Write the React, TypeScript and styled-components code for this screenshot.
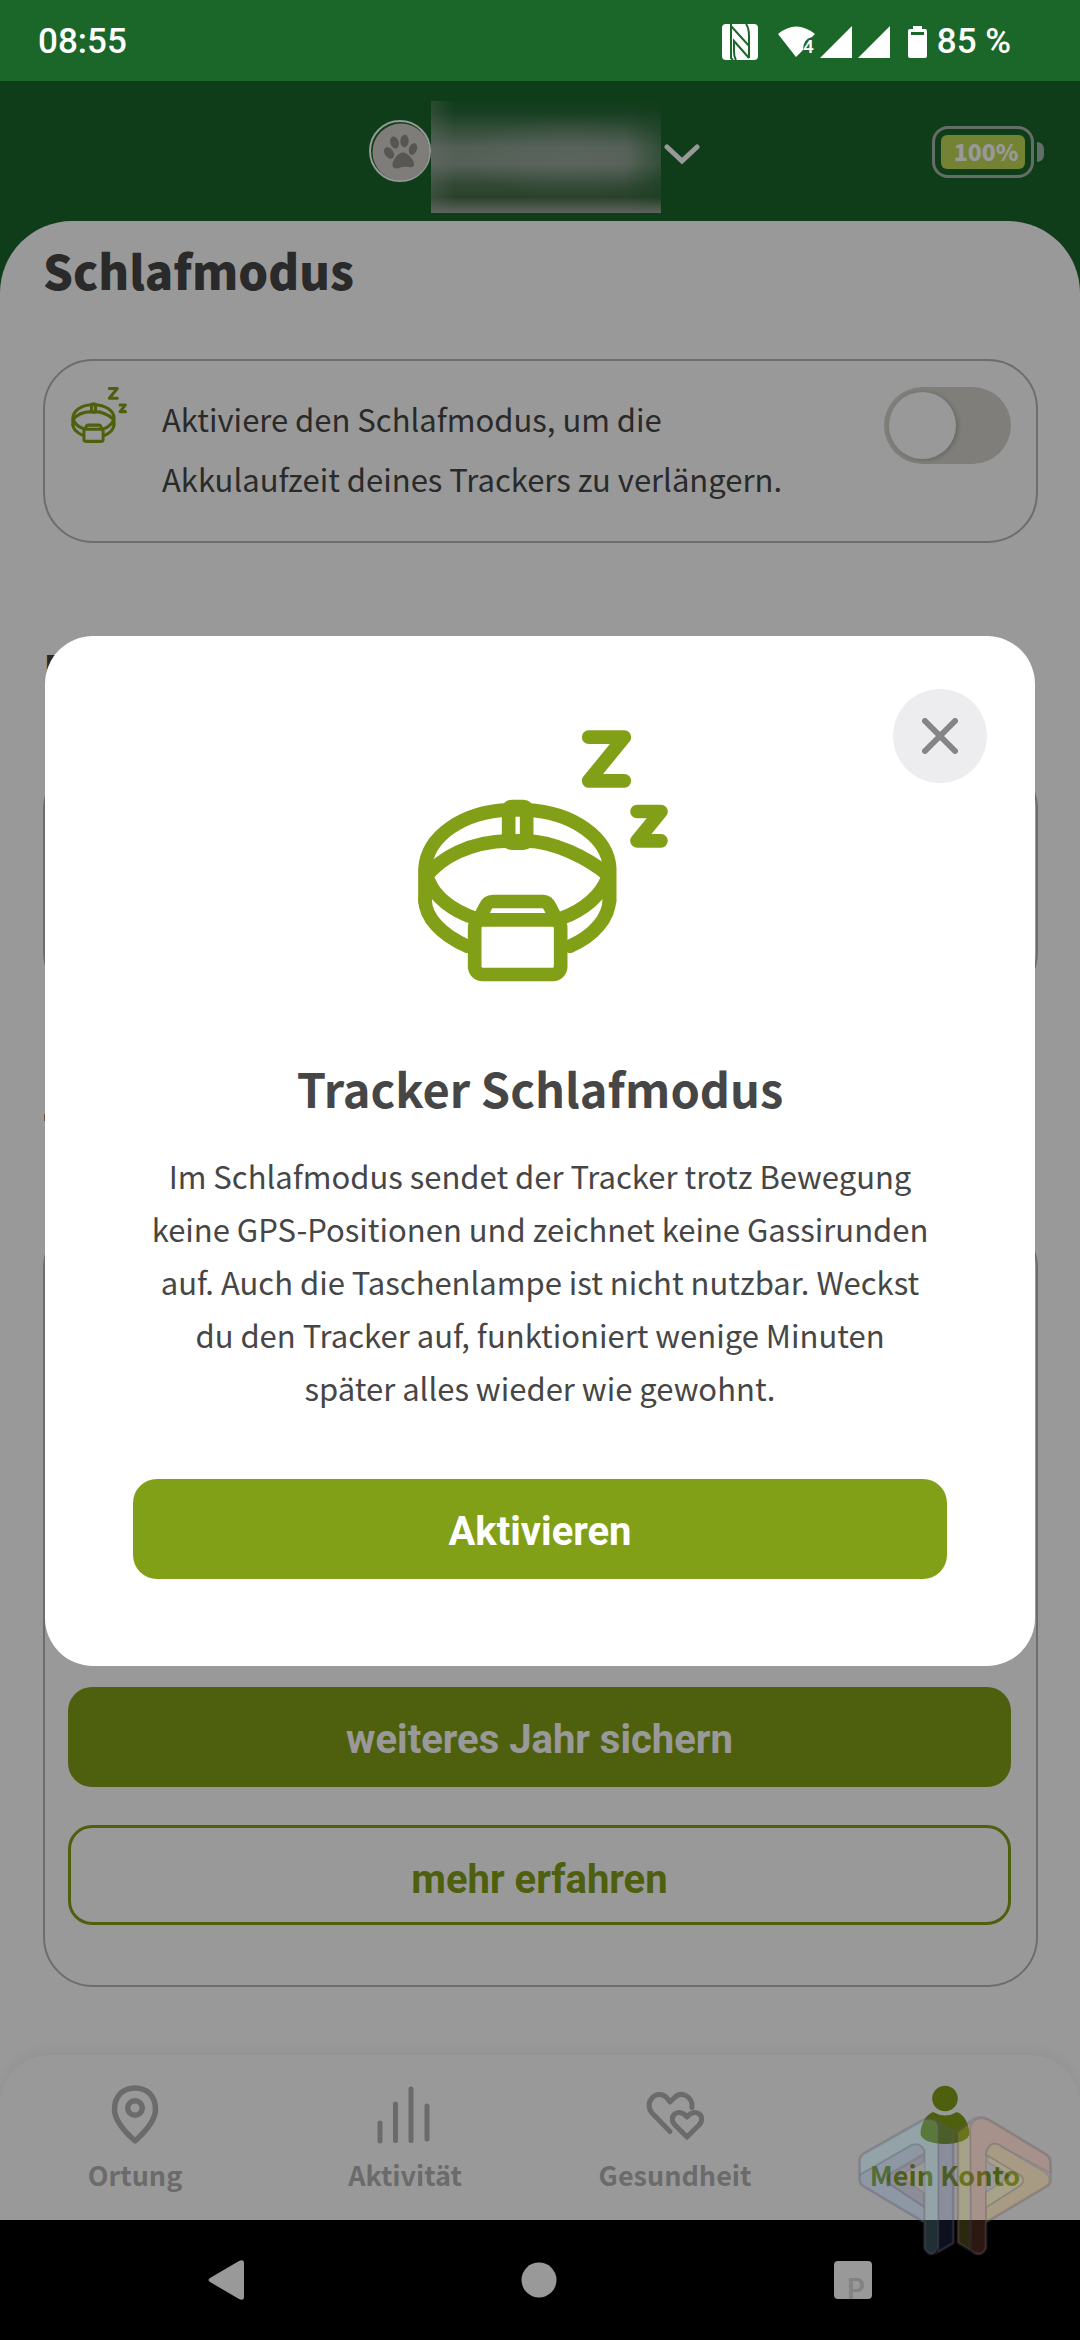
import React from "react";
import styled, { createGlobalStyle, css } from "styled-components";

const sans = `"Noto Sans CJK JP", "Noto Sans", sans-serif`;
const roboto = `Roboto, "Noto Sans", sans-serif`;
const green = "#82a017";
const ink = "#464646";
const line = "#b6b6b6";

const Global = createGlobalStyle`
  *, *::before, *::after { box-sizing: border-box; }
  body { margin: 0; background: #000; color: ${ink}; font-family: ${sans}; }
  h1, h2, p { margin: 0; }
  button { border: 0; padding: 0; background: none; font: inherit; color: inherit; cursor: pointer; }
  svg { display: block; flex: none; }
`;

const Screen = styled.div`
  min-height: 100vh;
  display: flex;
  flex-direction: column;
`;

const StatusBar = styled.div`
  height: 81px;
  padding: 2px 69px 0 38px;
  display: flex;
  align-items: center;
  justify-content: space-between;
  background: #1b672a;
  color: #fff;
  font: 500 35px/42px ${roboto};
`;

const StatusIcons = styled.div`
  display: flex;
  align-items: center;
`;

const StatusText = styled.span`
  margin-left: 10px;
`;

const AppArea = styled.div`
  position: relative;
  flex: 1;
  display: flex;
  flex-direction: column;
  background: #1b672a;
`;

const Header = styled.header`
  height: 140px;
  padding: 0 36px 0 24px;
  display: grid;
  grid-template-columns: 1fr auto 1fr;
  align-items: center;
`;

const PetPicker = styled.button`
  grid-column: 2;
  display: flex;
  align-items: center;
`;

const PetName = styled.span`
  width: 230px;
  height: 112px;
  margin: 12px 3px 0 0;
  background:
    linear-gradient(to top, rgba(165, 172, 164, 0.9) 0, rgba(160, 171, 159, 0) 16px),
    linear-gradient(to left, rgba(27, 103, 42, 0.5) 0, rgba(27, 103, 42, 0) 36px),
    linear-gradient(to right, rgba(190, 190, 190, 0.25) 0, rgba(160, 175, 160, 0) 24px),
    radial-gradient(ellipse 110px 40px at 60% 50%, rgba(172, 184, 176, 0.35) 0, rgba(172, 184, 176, 0) 100%),
    linear-gradient(to bottom, #1d672a 0, #27693a 10%, #54805e 24%, #8a9e8e 42%, #8fa193 56%, #557b5a 74%, #466e48 86%, #4a6e4e 100%);
`;

const BatteryWrap = styled.div`
  grid-column: 3;
  justify-self: end;
  display: flex;
  align-items: center;
  gap: 3px;
  padding-top: 2px;
`;

const BatteryShell = styled.div`
  width: 102px;
  height: 52px;
  padding: 6px;
  border: 3px solid #a9b8aa;
  border-radius: 16px;
`;

const BatteryFill = styled.div`
  height: 34px;
  padding-left: 6px;
  border-radius: 6px;
  background: #c1d955;
  color: #fff;
  text-align: center;
  font: 900 23px/32px ${sans};
`;

const BatteryNub = styled.div`
  width: 7px;
  height: 20px;
  border-radius: 0 8px 8px 0;
  background: #a9b8aa;
`;

const Sheet = styled.div`
  flex: 1;
  display: flex;
  flex-direction: column;
  justify-content: space-between;
  border-radius: 72px 72px 0 0;
  background: #fff;
`;

const Content = styled.main`
  padding: 12px 42px 68px 43px;
  display: flex;
  flex-direction: column;
  gap: 90px;
`;

const Section = styled.section`
  display: flex;
  flex-direction: column;
  gap: 52px;
`;

const SectionTitle = styled.h2`
  font: 900 47px/74px ${sans};
`;

const Card = styled.div<{ $height?: number }>`
  min-height: ${(p) => p.$height ?? 0}px;
  padding: 26px 25px;
  border: 2px solid ${line};
  border-radius: 50px;
`;

const SleepCard = styled(Card)`
  display: flex;
  align-items: flex-start;
  gap: 35px;
  padding-bottom: 32px;
`;

const SleepLabel = styled.label`
  flex: 1;
  padding-top: 2px;
  font: 400 31px/60px ${sans};
`;

const Switch = styled.input`
  appearance: none;
  flex: none;
  width: 127px;
  height: 77px;
  margin: 0;
  padding: 5px;
  border-radius: 39px;
  background: #d4d3cc;

  &::before {
    content: "";
    display: block;
    width: 67px;
    height: 67px;
    border-radius: 50%;
    background: #fff;
    box-shadow: 2px 1px 5px rgba(0, 0, 0, 0.2);
  }

  &:checked { background: ${green}; }
  &:checked::before { margin-left: auto; }
`;

const PlanCard = styled(Card)`
  display: flex;
  flex-direction: column;
  justify-content: flex-end;
  gap: 38px;
  padding: 60px 25px 60px 23px;
`;

const Button = styled.button<{ $outline?: boolean }>`
  width: 100%;
  height: 100px;
  padding-top: 6px;
  border-radius: 24px;
  background: ${green};
  color: #fff;
  font: 700 40px/48px ${roboto};
  ${(p) =>
    p.$outline &&
    css`
      padding-top: 10px;
      border: 3px solid ${green};
      background: #fff;
      color: ${green};
    `}
`;

const TabBar = styled.nav`
  height: 165px;
  padding-top: 29px;
  display: grid;
  grid-template-columns: repeat(4, 1fr);
  border-radius: 50px 50px 0 0;
  background: #fff;
  box-shadow: 0 -2px 14px rgba(0, 0, 0, 0.06);
`;

const Tab = styled.a<{ $active?: boolean }>`
  display: flex;
  flex-direction: column;
  align-items: center;
  gap: 11px;
  color: ${(p) => (p.$active ? green : "#b2b2b2")};
  font: 700 27px/40px ${sans};
  text-decoration: none;
`;

const Scrim = styled.div`
  position: absolute;
  inset: 0;
  padding: 0 45px;
  display: flex;
  align-items: center;
  background: rgba(0, 0, 0, 0.4);
`;

const Dialog = styled.div`
  position: relative;
  width: 100%;
  padding: 94px 88px 87px;
  display: flex;
  flex-direction: column;
  align-items: center;
  border-radius: 48px;
  background: #fff;
  text-align: center;
`;

const Close = styled.button`
  position: absolute;
  top: 53px;
  right: 48px;
  width: 94px;
  height: 94px;
  display: grid;
  place-items: center;
  border-radius: 50%;
  background: #ededef;
  color: #858488;
`;

const DialogTitle = styled.h1`
  margin: 70px 0 25px;
  font: 700 47px/72px ${sans};
`;

const DialogText = styled.p`
  margin-bottom: 65px;
  font: 400 31px/53px ${sans};
`;

const SystemNav = styled.nav`
  position: relative;
  height: 120px;
  display: flex;
  align-items: center;
  justify-content: center;
  gap: 277px;
  background: #000;
  color: #999;
`;

const SystemButton = styled.button`
  display: grid;
  place-items: center;
  width: 36px;
  height: 40px;
`;

const Recents = styled(SystemButton)`
  width: 38px;
  height: 38px;
  place-items: start;
  padding: 18px 0 0 13px;
  border-radius: 4px;
  background: #999;
  color: #828282;
  font: 600 28px/20px Inter, ${roboto};
`;

const Watermark = styled.div`
  position: absolute;
  right: 27px;
  bottom: 83px;
  pointer-events: none;
`;

function CollarIcon({ width, height }: { width: number; height: number }) {
  return (
    <svg width={width} height={height} viewBox="96 118 768 755" fill="none" stroke={green} strokeWidth="41" strokeLinecap="round" strokeLinejoin="round">
      <path d="M626 139H733L626 270H733" />
      <path d="M771 362H843L771 450H843" />
      <path d="M135 632V535C140 436 250 362 386 357H440C577 364 684 440 689 532V632" />
      <path d="M137 560C180 500 272 452 386 450H440C520 452 620 498 685 553" />
      <path d="M147 572C165 618 215 658 284 682" />
      <path d="M682 562C665 612 612 658 545 682" />
      <path d="M135 625C135 680 185 733 262 766" />
      <path d="M688 625C688 680 642 735 570 766" />
      <path d="M386 357Q386 347 396 347H430Q440 347 440 357V447Q440 457 430 457H396Q386 457 386 447Z" />
      <path d="M305 670L315 650Q323 632 338 632H490Q503 632 511 650L523 674" />
      <rect x="284" y="687" width="258" height="164" rx="24" />
    </svg>
  );
}

function NfcIcon() {
  return (
    <svg width="36" height="36" viewBox="0 0 36 36">
      <rect width="36" height="36" rx="4" fill="#fff" />
      <path d="M9 0V34L11 36M9 2L27 22V12Q27 4 24 0M27 34L12 17V28Q12 33 14 36M27 22V34" fill="none" stroke="#1b672a" strokeWidth="2" />
    </svg>
  );
}

const Wifi = styled.svg`
  margin-left: 20px;
`;

function WifiIcon() {
  return (
    <Wifi width="38" height="32" viewBox="0 0 38 32" fill="#fff">
      <path d="M0 8Q18-7 37 8L34 11Q25 13 25 24L18 31Z" />
      <text x="25" y="27" fontSize="19" fontWeight="500" fontFamily="Roboto">4</text>
    </Wifi>
  );
}

const Signal = styled.svg`
  margin-left: 4px;
  & + & { margin-left: 6px; }
`;

const StatusBattery = styled.svg`
  margin-left: 18px;
`;

function SignalIcon() {
  return (
    <Signal width="32" height="32" viewBox="0 0 32 32">
      <path d="M32 0V32H0Z" fill="#fff" />
    </Signal>
  );
}

function PawIcon() {
  return (
    <svg width="62" height="62" viewBox="0 0 62 62">
      <circle cx="31" cy="31" r="30" fill="none" stroke="#fff" strokeWidth="2" />
      <circle cx="32" cy="32" r="28.5" fill="#d4d1cb" />
      <g fill="#918f8b">
        <ellipse cx="20" cy="33" rx="4.3" ry="6.3" transform="rotate(-36 20 33)" />
        <ellipse cx="25.5" cy="22.5" rx="4.2" ry="6.2" transform="rotate(-18 25.5 22.5)" />
        <ellipse cx="35.5" cy="21" rx="4.2" ry="6.2" transform="rotate(5 35.5 21)" />
        <ellipse cx="44" cy="29" rx="4" ry="6" transform="rotate(20 44 29)" />
        <path d="M34 32.5C39 32.5 46 41 45 45C44 49 39 46 34 47C29 48 27 50 24 47C22 43 28 32.5 34 32.5Z" />
      </g>
    </svg>
  );
}

function PinIcon() {
  return (
    <svg width="60" height="60" viewBox="0 0 60 60" fill="none" stroke="currentColor" strokeWidth="5.5">
      <path d="M30 57C20 48 9.5 36 9.5 25.5C9.5 12 18 4 30 4S50.5 12 50.5 25.5C50.5 36 40 48 30 57Z" strokeLinejoin="round" />
      <circle cx="30" cy="24" r="7.3" />
    </svg>
  );
}

function BarsIcon() {
  return (
    <svg width="60" height="60" viewBox="0 0 60 60" fill="none" stroke="currentColor" strokeWidth="5" strokeLinecap="round">
      <path d="M5 39V57M20.5 20V56.5M36 5V56.5M52 22V55" />
    </svg>
  );
}

function HeartsIcon() {
  return (
    <svg width="60" height="60" viewBox="0 0 60 60" fill="none" stroke="currentColor" strokeWidth="5" strokeLinecap="round" strokeLinejoin="round">
      <path d="M25 47.5L7 29C-2 18 12 4 22 14L25 18L29 14C37 6 48 13 47 23.5" />
      <path d="M42 53L30 41C22 32 34 23 42 33C50 23 62 32 54 41Z" />
    </svg>
  );
}

function PersonIcon() {
  return (
    <svg width="60" height="60" viewBox="0 0 60 60" fill="currentColor">
      <circle cx="30" cy="14.5" r="12.8" />
      <path d="M18 28Q30 35 42 28C50 31 54 41 54.5 49C54.5 56 43 60 30 60S5.5 56 5.5 49C6 41 10 31 18 28Z" />
    </svg>
  );
}

function WatermarkLogo() {
  return (
    <svg width="196" height="141" viewBox="113 229 588 423" strokeLinejoin="round">
      <g stroke="rgba(95,85,105,.22)" strokeWidth="5">
        <path d="M120 405V362Q120 352 130 344L310 242Q338 226 357 250L408 278L455 244Q480 224 508 240L682 345Q694 353 694 365V420Q694 432 684 438L500 548V625Q490 650 465 640L416 610V270H402V610L350 640Q325 650 315 625V548L130 438Q120 432 120 420Z" fill="none" strokeWidth="9" />
        <path d="M122 405V362Q122 352 130 344L310 242Q357 230 357 270V625Q335 660 316 625V330Q300 305 275 318Z" fill="rgba(130,195,215,.24)" />
        <path d="M122 405L275 316Q305 306 316 340L205 405Q198 425 215 436L314 500V548L130 438Q120 430 122 405Z" fill="rgba(105,150,200,.24)" />
        <path d="M314 345L205 408Q198 425 215 436L314 503V460L240 408L314 367Z" fill="rgba(90,90,145,.18)" />
        <path d="M357 248L402 278V610L357 636Z" fill="rgba(70,90,160,.18)" />
        <path d="M416 278L453 250V630L416 608Z" fill="rgba(220,200,80,.2)" />
        <path d="M453 260Q470 224 508 240L682 345Q694 353 694 400L535 314Q510 305 500 335V625Q480 660 456 630Z" fill="rgba(220,120,80,.2)" />
        <path d="M500 345Q510 305 535 314L680 400Q700 420 684 438L500 548V503L605 436Q620 420 600 405L505 348Z" fill="rgba(225,165,60,.22)" />
        <path d="M500 503V458L575 408L505 367V348L605 408Q620 422 605 436Z" fill="rgba(220,200,80,.22)" />
      </g>
    </svg>
  );
}

export default function App() {
  return (
    <Screen lang="de">
      <Global />
      <StatusBar>
        <span>08:55</span>
        <StatusIcons>
          <NfcIcon />
          <WifiIcon />
          <SignalIcon />
          <SignalIcon />
          <StatusBattery width="19" height="32" viewBox="0 0 19 32">
            <path fillRule="evenodd" fill="#fff" d="M5 0H14V3H17Q19 3 19 5V30Q19 32 17 32H2Q0 32 0 30V5Q0 3 2 3H5ZM3 6V9H16V6Z" />
          </StatusBattery>
          <StatusText>85 %</StatusText>
        </StatusIcons>
      </StatusBar>

      <AppArea>
        <Header>
          <PetPicker aria-label="Haustier wählen">
            <PawIcon />
            <PetName />
            <svg width="36" height="26" viewBox="0 0 36 26" fill="none" stroke="#fff" strokeWidth="5" strokeLinecap="round">
              <path d="M3 9L18 23L33 9" />
            </svg>
          </PetPicker>
          <BatteryWrap>
            <BatteryShell>
              <BatteryFill>100%</BatteryFill>
            </BatteryShell>
            <BatteryNub />
          </BatteryWrap>
        </Header>

        <Sheet>
          <Content>
            <Section>
              <SectionTitle>Schlafmodus</SectionTitle>
              <SleepCard>
                <CollarIcon width={57} height={56} />
                <SleepLabel htmlFor="sleep">
                  Aktiviere den Schlafmodus, um die
                  <br />
                  Akkulaufzeit deines Trackers zu verlängern.
                </SleepLabel>
                <Switch id="sleep" type="checkbox" role="switch" />
              </SleepCard>
            </Section>
            <Section>
              <SectionTitle>Firmware</SectionTitle>
              <Card $height={243} />
            </Section>
            <Section>
              <SectionTitle>Tarif</SectionTitle>
              <PlanCard $height={769}>
                <Button>weiteres Jahr sichern</Button>
                <Button $outline>mehr erfahren</Button>
              </PlanCard>
            </Section>
          </Content>

          <TabBar>
            <Tab href="#ortung"><PinIcon />Ortung</Tab>
            <Tab href="#aktivitaet"><BarsIcon />Aktivität</Tab>
            <Tab href="#gesundheit"><HeartsIcon />Gesundheit</Tab>
            <Tab href="#konto" $active aria-current="page"><PersonIcon />Mein Konto</Tab>
          </TabBar>
        </Sheet>

        <Scrim>
          <Dialog role="dialog" aria-modal="true" aria-labelledby="dialog-title">
            <Close aria-label="Schließen">
              <svg width="36" height="36" viewBox="0 0 36 36" fill="none" stroke="currentColor" strokeWidth="6" strokeLinecap="round">
                <path d="M3 3L33 33M33 3L3 33" />
              </svg>
            </Close>
            <CollarIcon width={256} height={252} />
            <DialogTitle id="dialog-title">Tracker Schlafmodus</DialogTitle>
            <DialogText>
              Im Schlafmodus sendet der Tracker trotz Bewegung
              <br />
              keine GPS-Positionen und zeichnet keine Gassirunden
              <br />
              auf. Auch die Taschenlampe ist nicht nutzbar. Weckst
              <br />
              du den Tracker auf, funktioniert wenige Minuten
              <br />
              später alles wieder wie gewohnt.
            </DialogText>
            <Button>Aktivieren</Button>
          </Dialog>
        </Scrim>
      </AppArea>

      <SystemNav>
        <SystemButton aria-label="Zurück">
          <svg width="36" height="40" viewBox="0 0 36 40" fill="currentColor">
            <path d="M2 18L31 1Q36-1 36 3V37Q36 41 31 39L2 22Q-1 20 2 18Z" />
          </svg>
        </SystemButton>
        <SystemButton aria-label="Startseite">
          <svg width="36" height="36" viewBox="0 0 36 36" fill="currentColor">
            <circle cx="18" cy="18" r="17.5" />
          </svg>
        </SystemButton>
        <Recents aria-label="Übersicht">P</Recents>
        <Watermark>
          <WatermarkLogo />
        </Watermark>
      </SystemNav>
    </Screen>
  );
}
